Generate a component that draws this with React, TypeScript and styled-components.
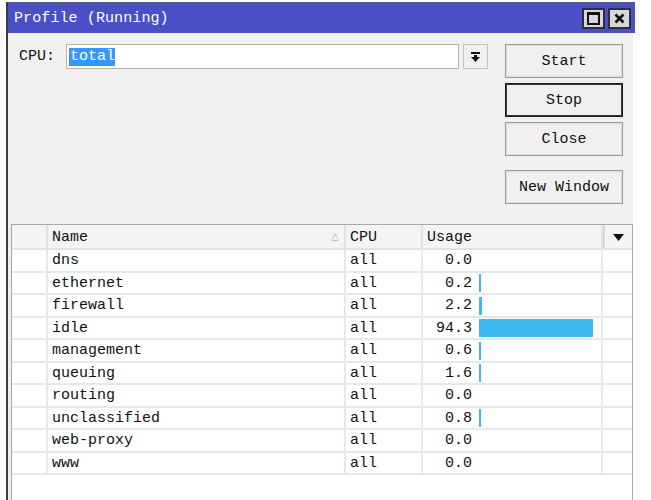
import React from "react";
import styled, { createGlobalStyle } from "styled-components";

const Global = createGlobalStyle`
  html, body { margin: 0; padding: 0; background: #ffffff; }
  body { width: 651px; height: 500px; overflow: hidden; font-family: "Liberation Mono", "DejaVu Sans Mono", monospace; font-size: 15px; color: #111; }
  * { box-sizing: border-box; }
`;

const Window = styled.div`
  margin: 2px 0 0 6px;
  width: 629px;
  height: 498px;
  border-left: 2px solid #3a3a3a;
  border-top: 1px solid #5a5a7a;
  display: flex;
  flex-direction: column;
`;

const TitleBar = styled.div`
  height: 30px;
  flex: none;
  background: #4a4fc7;
  color: #ffffff;
  display: flex;
  align-items: center;
  justify-content: space-between;
  padding: 1px 4px 0 6px;
`;

const Title = styled.span`
  font-size: 15px;
  letter-spacing: 0.1px;
`;

const TitleButtons = styled.div`
  display: flex;
  gap: 3px;
`;

const TitleButton = styled.div`
  width: 23px;
  height: 21px;
  background: #d8d8d8;
  border: 2px solid #2e2e3e;
  display: flex;
  align-items: center;
  justify-content: center;
`;

const Body = styled.div`
  flex: 1;
  margin-right: 2px;
  background: #f0f0f0;
  display: flex;
  flex-direction: column;
`;

const TopPanel = styled.div`
  height: 191px;
  flex: none;
  display: flex;
  justify-content: space-between;
  align-items: flex-start;
  padding: 11px 10px 0 11px;
`;

const CpuRow = styled.div`
  display: flex;
  align-items: center;
`;

const Label = styled.span`
  width: 47px;
`;

const Input = styled.div`
  width: 393px;
  height: 25px;
  background: #ffffff;
  border: 1px solid #b4b4b4;
  display: flex;
  align-items: center;
  padding-left: 2px;
`;

const Selected = styled.span`
  background: #3399ff;
  color: #ffffff;
  padding: 0 0 0 1px;
  line-height: 18px;
`;

const DropButton = styled.div`
  width: 25px;
  height: 25px;
  margin-left: 4px;
  border: 1px solid #c4c4c4;
  background: #f0f0f0;
  display: flex;
  align-items: center;
  justify-content: center;
`;

const ButtonColumn = styled.div`
  width: 118px;
  display: flex;
  flex-direction: column;
  gap: 5px;
`;

const Button = styled.div<{ $focused?: boolean; $spaced?: boolean }>`
  height: 34px;
  display: flex;
  align-items: center;
  justify-content: center;
  padding-top: 1px;
  background: #f0f0f0;
  border: 1px solid ${(p) => (p.$focused ? "#1a1a1a" : "#9a9a9a")};
  box-shadow: inset 0 0 0 1px ${(p) => (p.$focused ? "#3a3a3a" : "#dedede")};
  margin-top: ${(p) => (p.$spaced ? "9px" : "0")};
`;

const TablePanel = styled.div`
  flex: 1;
  padding-left: 3px;
  display: flex;
`;

const Table = styled.div`
  width: 622px;
  flex: none;
  background: #ffffff;
  border: 1px solid #a8a8a8;
  border-bottom: none;
`;

const cols = "36px 298px 77px 180px 29px";

const HeaderRow = styled.div`
  display: grid;
  grid-template-columns: ${cols};
  height: 25px;
  background: #f4f4f4;
  border-bottom: 2px solid #e2e2e2;
`;

const HeaderCell = styled.div<{ $last?: boolean }>`
  display: flex;
  align-items: center;
  justify-content: ${(p) => (p.$last ? "center" : "space-between")};
  padding: 1px 5px 0 4px;
  border-right: ${(p) => (p.$last ? "none" : "2px solid #e2e2e2")};
  border-left: ${(p) => (p.$last ? "2px solid #d8d8d8" : "none")};
`;

const Row = styled.div`
  display: grid;
  grid-template-columns: ${cols};
  height: 22.5px;
  border-bottom: 2px solid #e8e8e8;
`;

const Cell = styled.div<{ $last?: boolean }>`
  display: flex;
  align-items: center;
  padding: 1px 0 0 4px;
  border-right: ${(p) => (p.$last ? "none" : "2px solid #e8e8e8")};
  white-space: nowrap;
`;

const UsageCell = styled(Cell)`
  padding-left: 0;
`;

const Value = styled.span`
  width: 49px;
  text-align: right;
`;

const Bar = styled.div`
  margin-left: 7px;
  height: 18px;
  background: #3dbbee;
`;

const rows: [string, number][] = [
  ["dns", 0.0],
  ["ethernet", 0.2],
  ["firewall", 2.2],
  ["idle", 94.3],
  ["management", 0.6],
  ["queuing", 1.6],
  ["routing", 0.0],
  ["unclassified", 0.8],
  ["web-proxy", 0.0],
  ["www", 0.0],
];

export default function App() {
  return (
    <>
      <Global />
      <Window>
        <TitleBar>
          <Title>Profile (Running)</Title>
          <TitleButtons>
            <TitleButton>
              <svg width="13" height="13" viewBox="0 0 13 13">
                <rect x="1" y="1" width="11" height="11" fill="none" stroke="#111" strokeWidth="2" />
                <rect x="1" y="1" width="11" height="2" fill="#111" />
              </svg>
            </TitleButton>
            <TitleButton>
              <svg width="11" height="11" viewBox="0 0 11 11">
                <path d="M1.5 1.5 L9.5 9.5 M9.5 1.5 L1.5 9.5" stroke="#111" strokeWidth="2.6" />
              </svg>
            </TitleButton>
          </TitleButtons>
        </TitleBar>
        <Body>
          <TopPanel>
            <CpuRow>
              <Label>CPU:</Label>
              <Input>
                <Selected>total</Selected>
              </Input>
              <DropButton>
                <svg width="9" height="10" viewBox="0 0 9 10">
                  <rect x="0" y="0" width="9" height="2" fill="#111" />
                  <rect x="3" y="3" width="3" height="3" fill="#111" />
                  <polygon points="0,5 9,5 4.5,10" fill="#111" />
                </svg>
              </DropButton>
            </CpuRow>
            <ButtonColumn>
              <Button>Start</Button>
              <Button $focused>Stop</Button>
              <Button>Close</Button>
              <Button $spaced>New Window</Button>
            </ButtonColumn>
          </TopPanel>
          <TablePanel>
            <Table>
              <HeaderRow>
                <HeaderCell />
                <HeaderCell>
                  <span>Name</span>
                  <svg width="8" height="8" viewBox="0 0 8 8">
                    <polygon points="4,0.5 7.5,7.5 0.5,7.5" fill="none" stroke="#c8c8c8" strokeWidth="1" />
                  </svg>
                </HeaderCell>
                <HeaderCell>CPU</HeaderCell>
                <HeaderCell>Usage</HeaderCell>
                <HeaderCell $last>
                  <svg width="11" height="7" viewBox="0 0 11 7">
                    <polygon points="0,0 11,0 5.5,7" fill="#111" />
                  </svg>
                </HeaderCell>
              </HeaderRow>
              {rows.map(([name, v]) => (
                <Row key={name}>
                  <Cell />
                  <Cell>{name}</Cell>
                  <Cell>all</Cell>
                  <UsageCell>
                    <Value>{v.toFixed(1)}</Value>
                    {v > 0 && <Bar style={{ width: Math.max(2, Math.round(v * 1.21)) }} />}
                  </UsageCell>
                  <Cell $last />
                </Row>
              ))}
            </Table>
          </TablePanel>
        </Body>
      </Window>
    </>
  );
}
